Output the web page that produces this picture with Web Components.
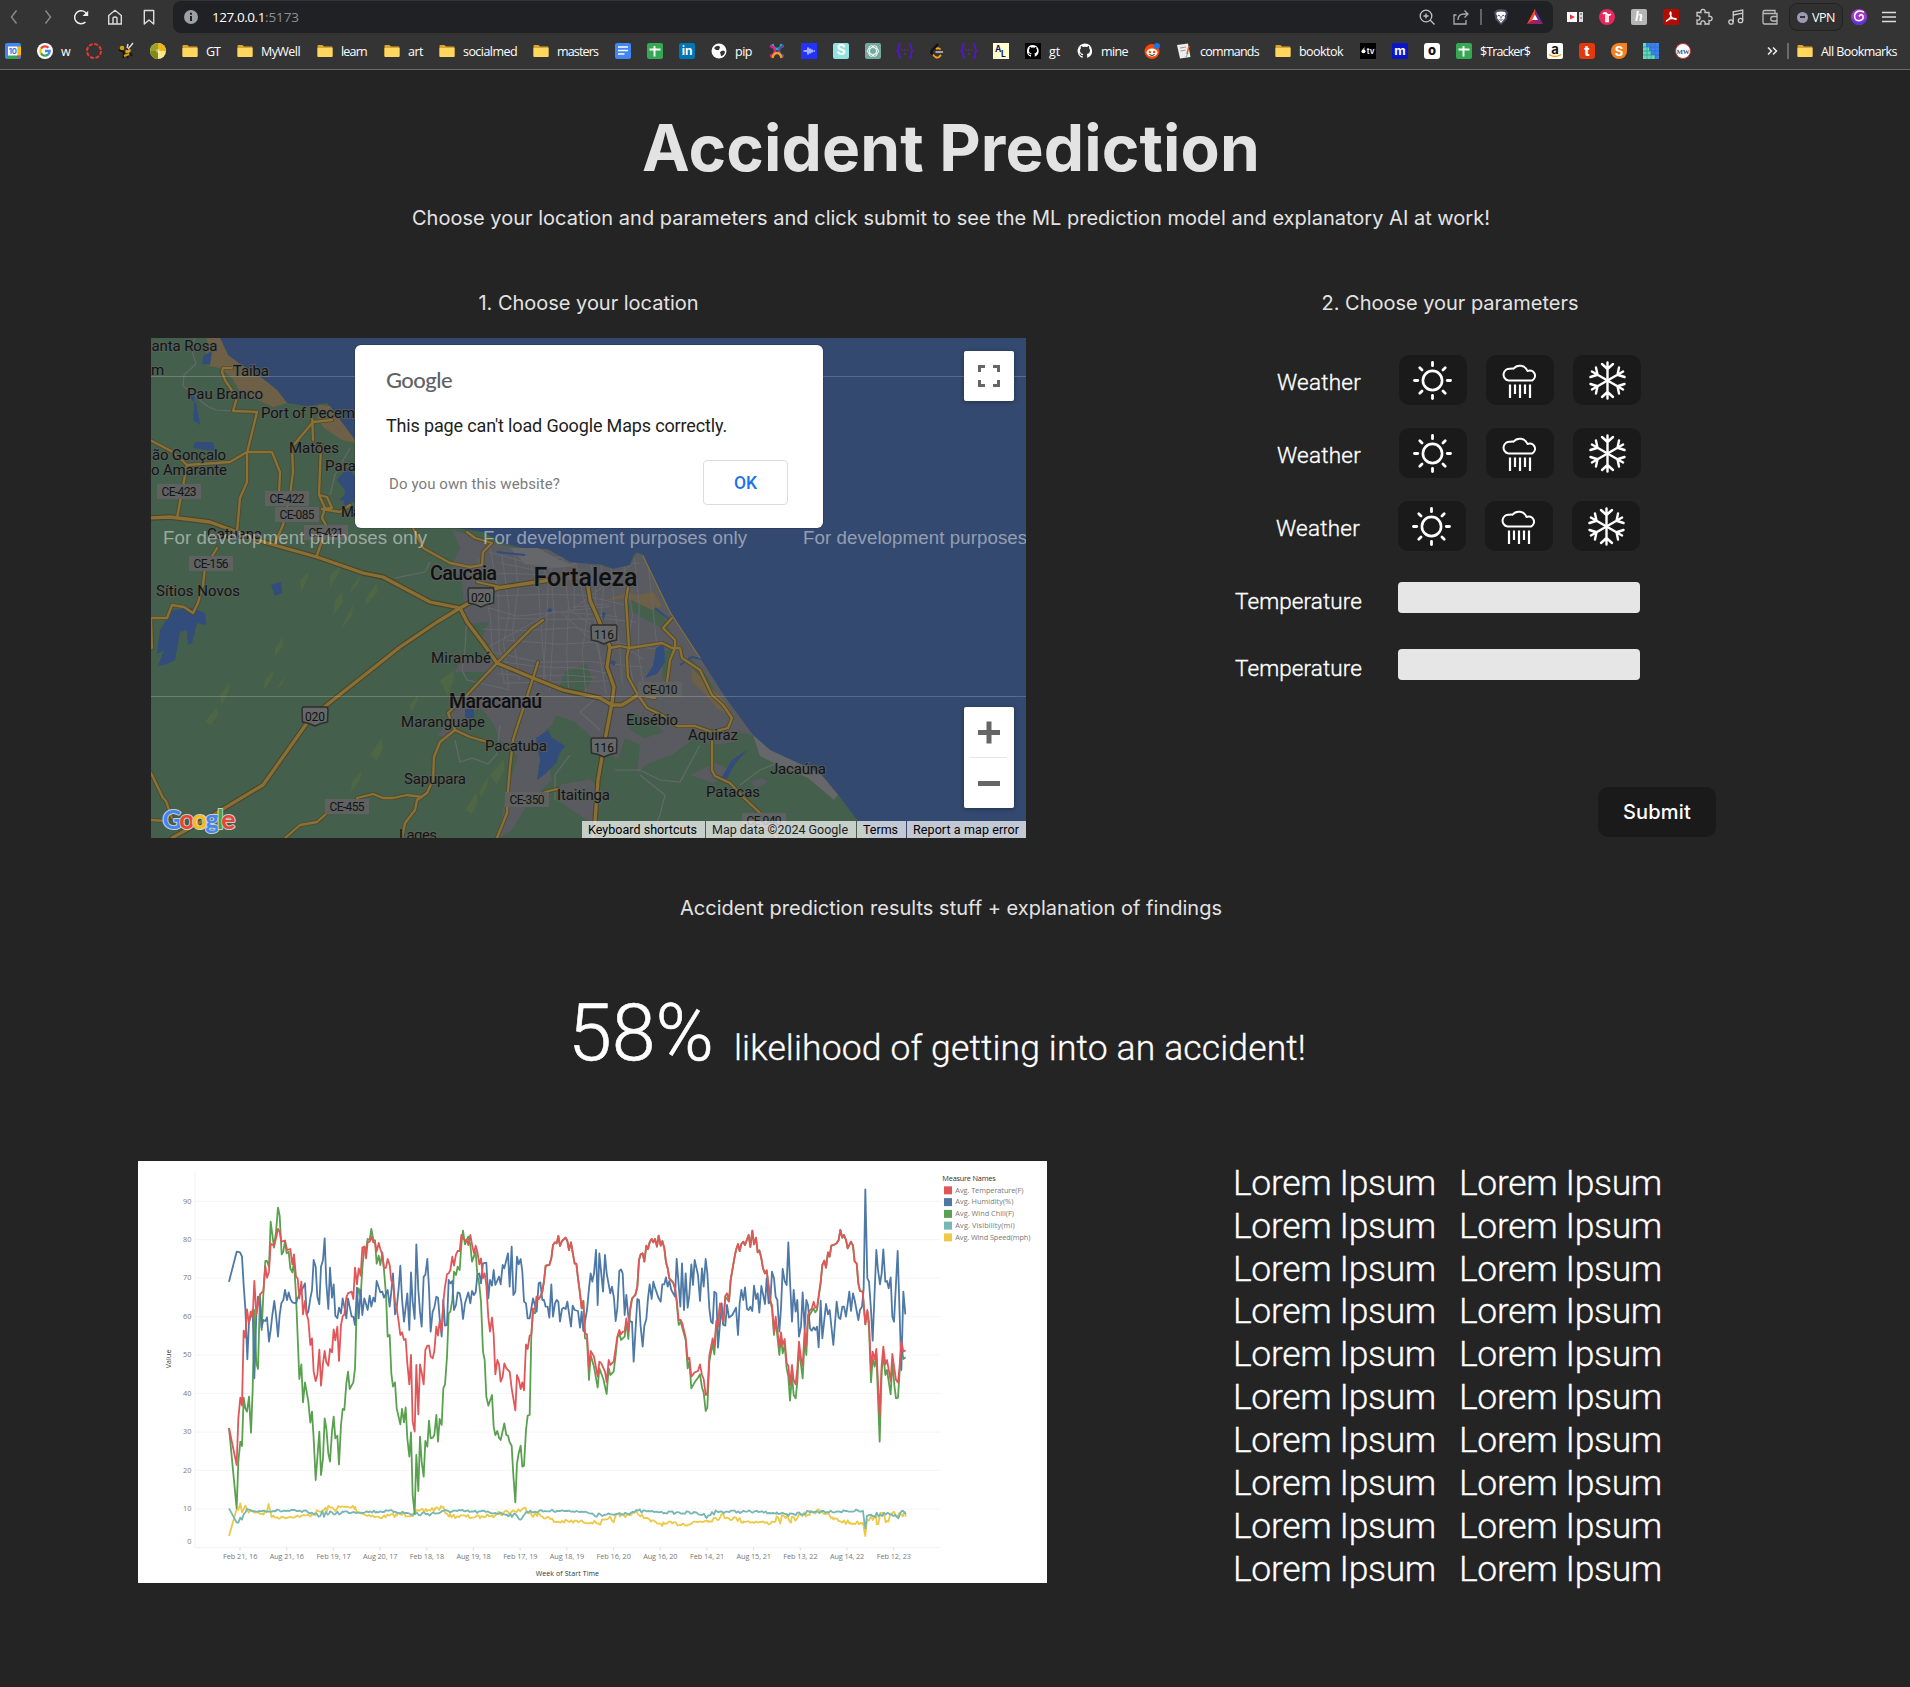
<!DOCTYPE html>
<html lang="en">
<head>
<meta charset="utf-8">
<title>Accident Prediction</title>
<style>
html,body{margin:0;background:#242424;color:#e3e3e3;font-family:Inter,"Liberation Sans",sans-serif}
body{width:1910px;height:1687px;overflow:hidden}
</style>
</head>
<body>
<accident-app></accident-app>
<script>
const define=(name,html,init)=>customElements.define(name,class extends HTMLElement{
  connectedCallback(){
    if(this.shadowRoot)return;
    const t=document.createElement('template');
    t.innerHTML=typeof html==='function'?html(this):html;
    this.attachShadow({mode:'open'}).append(t.content.cloneNode(true));
    if(init)init(this,this.shadowRoot);
  }
});

/* A single line of text, tracked so that it fills the width in its w attribute. */
define('fit-text','<style>:host{display:inline-block;white-space:pre}</style><span><slot></slot></span>',(el,root)=>{
  const w=+el.getAttribute('w'),s=root.querySelector('span');
  const n=s.getBoundingClientRect().width,c=el.textContent.length;
  if(w&&n){s.style.letterSpacing=((w-n)/c).toFixed(3)+'px';el.style.width=w+'px'}
});

const letter=(bg,t,fg,fs=12,extra='')=>`<rect width="16" height="16" rx="2" fill="${bg}"/><text x="8" y="12.3" text-anchor="middle" font-size="${fs}" font-weight="700" fill="${fg}" ${extra}>${t}</text>`;
const cat='<path d="M8 0.5a7.5 7.5 0 0 0-2.4 14.6v-2.3c-2 .4-2.5-.9-2.8-1.5-.3-.5-.8-.8-.2-.9.8-.1 1.200.6 1.500 1 .6.9 1.200.8 1.700.6.1-.5.3-.8.6-1-1.900-.3-3.400-1.200-3.400-3.600 0-.9.3-1.600.9-2.200-.1-.4-.3-1.200.1-2.100 0 0 .7-.1 2.100.9a7 7 0 0 1 3.800 0c1.400-1 2.100-.9 2.100-.9.4.9.2 1.700.1 2.100.6.600.9 1.300.9 2.200 0 2.400-1.500 3.300-3.400 3.600.4.300.6.8.6 1.600v2.400A7.500 7.500 0 0 0 8 .5z" fill="#fff"/>';
const ICONS={
back:'<path d="M10.500 1.500 5.500 8l5 6.500" fill="none" stroke="#8b8b8b" stroke-width="1.400"/>',
fwd:'<path d="m5.500 1.500 5 6.500-5 6.500" fill="none" stroke="#8b8b8b" stroke-width="1.400"/>',
reload:'<path d="M12.500 13A6.500 6.500 0 1 1 13.800 5" fill="none" stroke="#eee" stroke-width="1.500"/><path d="M9.500 7h5.700V1.800z" fill="#eee"/>',
home:'<path d="M1.700 6.500 8 1.300l6.300 5.200V15H1.700zM6 15V9.500q0-1.500 2-1.500t2 1.500V15" fill="none" stroke="#ddd" stroke-width="1.400"/>',
mark:'<path d="M3.300 1.500h9.400v13.500L8 11l-4.700 4z" fill="none" stroke="#ddd" stroke-width="1.400" stroke-linejoin="round"/>',
info:'<circle cx="8" cy="8" r="7" fill="#9aa0a6"/><path d="M7 7h2v5H7zM7 3.800h2v2H7z" fill="#202124"/>',
mag:'<g fill="none" stroke="#c3c3c3" stroke-width="1.300"><circle cx="7" cy="7" r="5.800"/><path d="m11.300 11.300 4.200 4.200M4.500 7h5M7 4.500v5"/></g>',
share:'<g fill="none" stroke="#aaa" stroke-width="1.300"><path d="M3.500 6H1v9h12v-4M5 11q0-6 6-6h4M11.500 1.500 15 5l-3.500 3.500"/></g>',
bar:'<path d="M8 0v16" stroke="#888" stroke-width="1.300"/>',
brave:'<path d="M8 0 3.500.8 1 3.500l1.500 7L8 16l5.500-5.500 1.500-7L12.500.8z" fill="#4a4f63"/><path d="M8 2.500 4 3l-1 2 1.500 2L4 9l4 5L12 9l-.5-2L13 5l-1-2z" fill="#fff"/><path d="M5 6.200 7 7M11 6.200 9 7M8 7v2.500M6.500 10.500 8 11.300l1.500-.8" stroke="#4a4f63" fill="none"/>',
bat:'<path d="M8 0 0 15h16z" fill="#662d91"/><path d="M8 0 0 15l8-4.800z" fill="#ff4724"/><path d="M0 15h16l-8-4.800z" fill="#9e1f63"/><path d="M8 5.500 5 11h6z" fill="#fff"/>',
cam:'<rect y="3" width="10" height="10" fill="#fff"/><path d="M3 5.500v5L8 8z" fill="#e33"/><path d="M12 3h4v10h-4z" fill="#ddd"/><path d="M14 4v8" stroke="#555" stroke-dasharray="2"/>',
pink:'<circle cx="8" cy="8" r="8" fill="#e5295c"/><path d="M4 5q2-2 4 0t4 0M9 5.500v7H7v-7" stroke="#fff" stroke-width="1.700" fill="none"/>',
h:letter('#b5b5b5','h','#fff',14,'font-style="italic" font-family="Liberation Serif"'),
pdf:'<rect width="16" height="16" rx="2" fill="#b30b00"/><path d="M3 12.500Q9 9 8 3.500 7 2 7 5q1.500 5 6 5.500 1-1.500-3-1.200Q5 9.700 3 12.500z" fill="none" stroke="#fff" stroke-width="1.200"/>',
puzzle:'<path d="M2 3.500h4a2.200 2.200 0 1 1 4 0h4v4a2.200 2.200 0 1 1 0 4V15h-4a2.200 2.200 0 1 0-4 0H2v-4a2.200 2.200 0 1 0 0-4z" fill="none" stroke="#ccc" stroke-width="1.300"/>',
music:'<g fill="none" stroke="#ccc" stroke-width="1.300"><circle cx="3" cy="13" r="2.200"/><circle cx="12.500" cy="11.500" r="2.200"/><path d="M5.200 13V2.800L14.700 1v10.500M5.200 6l9.500-1.800"/></g>',
wallet:'<g fill="none" stroke="#bbb" stroke-width="1.300"><path d="M13 4V1.500H2.500a1.500 1.500 0 0 0 0 3H15V15H2.500A1.500 1.500 0 0 1 1 13.500V3M15 7.500h-4a2 2 0 0 0 0 4.500h4"/></g>',
swirl:'<circle cx="8" cy="8" r="8" fill="#a136c8"/><path d="M0 8a8 8 0 0 0 16 0q-3 5-8 5T0 8" fill="#5b35d8"/><path d="M13 3Q5 0 3.500 6.500q0 6 5.500 5 4-1 3-4.500-2-3-4 .5" fill="none" stroke="#fff" stroke-width="1.600"/>',
menu:'<path d="M1 3.500h14M1 8h14M1 12.500h14" stroke="#ddd" stroke-width="1.400"/>',
cal:'<rect width="16" height="16" rx="2" fill="#4285f4"/><path d="M12.500 3.500H16v9h-3.500z" fill="#fbbc04"/><path d="M2 12.500h10.500V16H2z" fill="#34a853"/><path d="M12.500 12.500H16L12.500 16z" fill="#ea4335"/><rect x="3" y="3.500" width="9.500" height="9" fill="#fff"/><text x="7.800" y="10.700" text-anchor="middle" font-size="7.500" font-weight="700" fill="#1a73e8">10</text>',
g:'<circle cx="8" cy="8" r="8" fill="#fff"/><g fill="none" stroke-width="2.300"><path d="M11.500 4.800A4.700 4.700 0 0 0 4 5.600" stroke="#ea4335"/><path d="M4 5.600a4.700 4.700 0 0 0 0 4.800" stroke="#fbbc05"/><path d="M4 10.400a4.700 4.700 0 0 0 7.300 1" stroke="#34a853"/><path d="M11.300 11.400Q12.700 10 12.700 8H8" stroke="#4285f4"/></g>',
ring:'<circle cx="8" cy="8" r="7" fill="none" stroke="#e8392f" stroke-width="2" stroke-dasharray="4 1.500"/>',
wasp:'<ellipse cx="10" cy="8" rx="3" ry="2" fill="#e4a820" transform="rotate(-30 10 8)"/><circle cx="4" cy="5" r="2.300" fill="#d9a300"/><path d="m8 3 2 4M12 1l-1 5M1 7l5 2M6 9l-1 6M9 10l1 5M12 10l2 3" stroke="#111" stroke-width="1.500"/><path d="m10 6 5-6M9 5l1-4" stroke="#ddd" stroke-width="1.500"/><path d="m6 13 5-2" stroke="#d9a300" stroke-width="2"/>',
pie:'<circle cx="8" cy="8" r="8" fill="#ffe88a"/><path d="M8 8V0a8 8 0 0 0-8 8z" fill="#98a32a"/><path d="M8 8H0a8 8 0 0 0 8 8z" fill="#7c8a17"/><path d="M8 8V0a8 8 0 0 1 8 8z" fill="#efb71e"/><circle cx="8" cy="8" r="2" fill="#fff6"/>',
folder:'<path d="M.5 3q0-1 1-1h4l1.500 1.500h7.500q1 0 1 1V13q0 1-1 1h-13q-1 0-1-1z" fill="#d9a334"/><path d="M.5 5h15v8q0 1-1 1h-13q-1 0-1-1z" fill="#ffd75e"/>',
docs:'<rect width="16" height="16" rx="2" fill="#4285f4"/><path d="M3 4h10M3 7.500h10M3 11h6.500" stroke="#fff" stroke-width="1.700"/>',
sheets:'<rect width="16" height="16" rx="2" fill="#34a853"/><path d="M2.500 6.500h11M7.500 3v10.500" stroke="#fff" stroke-width="1.900"/>',
in:letter('#0077b5','in','#fff',12),
globe:'<circle cx="8" cy="8" r="7.500" fill="#fff"/><path d="M3 5q4-4 6-1L8 7H5zm6 4q4-3 5 0-1 4-4 4z" fill="#333"/>',
x:'<g fill="none" stroke-width="2.400"><path d="M3.500 1q1 5 4.500 5t4.500-5" stroke="#12b5c9"/><path d="M1 3q5 1 5 5t-5 5" stroke="#e0218a"/><path d="M15 3q-5 1-5 5t5 5" stroke="#5a50a8"/><path d="M3.500 15q1-5 4.500-5t4.500 5" stroke="#f59b1c"/></g>',
wave:'<rect width="16" height="16" fill="#2233ff"/><path d="M2.500 8h1.500M5 7v2M7 4.500v7M9 5.500v5M11 6.500v3M12.500 8h1.500" stroke="#fff" stroke-width="1.200"/>',
s:letter('#8fe3e0','S','#fff',14),
gpt:'<rect width="16" height="16" rx="2" fill="#74aa9c"/><g fill="none" stroke="#fff" stroke-width=".8"><ellipse cx="8" cy="8" rx="5.800" ry="3.400"/><ellipse cx="8" cy="8" rx="5.800" ry="3.400" transform="rotate(60 8 8)"/><ellipse cx="8" cy="8" rx="5.800" ry="3.400" transform="rotate(120 8 8)"/></g>',
br:'<g fill="none" stroke="#5a12e0" stroke-width="1.500"><path d="M4 1Q2 1 2 3.500T.500 8Q2 8.500 2 12t2 3M12 1q2 0 2 2.500T15.500 8Q14 8.500 14 12t-2 3"/></g><path d="M4.500 7h1M7 7h1M10 7h1M7 11h2" stroke="#8a1fd0" stroke-width="1.200"/>',
leet:'<path d="M9 1 3 7.500q-1.500 1.500 0 3L6.500 14" fill="none" stroke="#111" stroke-width="2.200"/><path d="M4 11.500q3 4.500 6 2.500l2-2M7 6q2.500-1.800 4.500.5" fill="none" stroke="#ffa116" stroke-width="1.800"/><path d="M6.500 9H14" stroke="#b3b3b3" stroke-width="1.800"/>',
al:'<rect width="16" height="16" fill="#ffffd0"/><text x="2" y="8.500" font-size="8.500" font-weight="700" fill="#111166">A</text><text x="8" y="14" font-size="8.500" font-weight="700" fill="#111166">L</text>',
ghs:'<rect width="16" height="16" fill="#000"/><g transform="translate(1.500 1.500) scale(.81)">'+cat+'</g>',
gh:cat,
reddit:'<circle cx="8" cy="8.500" r="7.500" fill="#ff4500"/><ellipse cx="8" cy="9.500" rx="5.500" ry="4" fill="#fff"/><circle cx="5.800" cy="9" r="1.200" fill="#ff4500"/><circle cx="10.200" cy="9" r="1.200" fill="#ff4500"/><path d="M5.500 11.500q2.500 2 5 0" stroke="#222" fill="none"/><circle cx="13" cy="3" r="3" fill="#1a73e8"/>',
note:'<path d="m1 2 11-1.500L14.500 14 4 15.500z" fill="#eee"/><path d="m4 5 6-1M4.500 8l5-.8" stroke="#999"/><path d="m13 3-2 8" stroke="#e06030" stroke-width="1.500"/><path d="m10 14 2-4" stroke="#3bb"/>',
tv:'<rect width="16" height="16" fill="#000"/><circle cx="3.500" cy="8.300" r="2" fill="#fff"/><path d="m3.500 6 1-1.300" stroke="#fff"/><text x="10.500" y="10.800" text-anchor="middle" font-size="8" font-weight="600" fill="#fff">tv</text>',
m:letter('#0a14c8','m','#fff',12.500),
o:'<rect width="16" height="16" rx="3" fill="#fff"/><text x="8" y="12.300" text-anchor="middle" font-size="13" font-weight="800" fill="#111">o</text>',
amz:'<rect width="16" height="16" rx="2" fill="#fff"/><text x="8" y="10.500" text-anchor="middle" font-size="13" font-weight="700" fill="#111">a</text><path d="M2 11.500q6 4 12 0" fill="none" stroke="#f90" stroke-width="1.500"/>',
t:'<rect width="16" height="16" rx="3" fill="#e23a0c"/><text x="8" y="12.800" text-anchor="middle" font-size="14" font-weight="800" fill="#fff">t</text>',
so:'<path d="M8 0h8v8a8 8 0 1 1-8-8z" fill="#f58220"/><text x="8" y="12.700" text-anchor="middle" font-size="13" font-weight="700" fill="#fff">S</text>',
map:'<rect width="16" height="16" fill="#3d82ea"/><path d="M0 0h3v4h3v4h2v4h4v4H0z" fill="#5fe0a8"/><path d="M0 4h16M0 8h16M0 12h16M4 0v16M8 0v16M12 0v16" stroke="#2b66c4" stroke-width=".5"/>',
mw:'<circle cx="8" cy="8" r="7.500" fill="#fff" stroke="#c33"/><text x="8" y="10.500" text-anchor="middle" font-size="6.800" font-weight="700" font-family="Liberation Serif" fill="#25609b">MW</text>',
more:'<path d="m3 4.500 3.500 3.500L3 11.500m5-7 3.500 3.500L8 11.500" fill="none" stroke="#eee" stroke-width="1.500"/>'
};
define('ui-icon',el=>`<style>:host{display:block;flex:none;width:16px;height:16px}svg{display:block;overflow:visible}</style><svg width="16" height="16" viewBox="0 0 16 16" font-family="Inter,sans-serif">${ICONS[el.getAttribute('name')]}</svg>`);

const slots=(items,end)=>items.map((it,i)=>{
  const [x,ic,txt,w]=it,nx=i+1<items.length?items[i+1][0]:end;
  return `<span class="slot" style="width:${nx-x}px"><ui-icon name="${ic}"></ui-icon>${txt?`<fit-text w="${w}">${txt}</fit-text>`:''}</span>`}).join('');

define('browser-bar',()=>`<style>
:host{display:block;height:70px;box-sizing:border-box;background:#343434;border-bottom:1px solid #6a6a6a;font:12.500px "Open Sans","Noto Sans",sans-serif;color:#fff;width:1910px}
.top{display:flex;height:34px;align-items:center}
.nav{display:flex;padding-left:6px;width:167px;gap:17.700px}
.addr{display:flex;align-items:center;box-sizing:border-box;width:1380px;height:32px;background:#202124;border-radius:8px;padding:0 0 0 10px;font-size:13.500px}
.addr .url{margin-left:13px;display:flex}.addr .port{color:#8d9094}
.addr .tail{display:flex;margin-left:auto;width:134px}
.slot{display:flex;align-items:center;gap:8px;flex:none}
.ext{display:flex;padding-left:14px;align-items:center}
.vpn{display:flex;align-items:center;gap:4px;width:54px;height:28px;box-sizing:border-box;border:1px solid #222;border-radius:8px;padding-left:7px;background:#303030}
.vpn i{width:11px;height:11px;border-radius:50%;background:#9a9ab0;display:flex;align-items:center;justify-content:center}.vpn i:after{content:"";width:5px;height:2px;background:#333}
.marks{display:flex;height:34px;align-items:center;padding-left:5px}
</style>
<div class="top"><div class="nav">${['back','fwd','reload','home','mark'].map(n=>`<ui-icon name="${n}"></ui-icon>`).join('')}</div>
<div class="addr"><ui-icon name="info"></ui-icon><span class="url"><fit-text w="53">127.0.0.1</fit-text><fit-text class="port" w="34">:5173</fit-text></span>
<span class="tail">${slots([[1419,'mag'],[1453,'share'],[1473,'bar'],[1493,'brave'],[1527,'bat']],1551)}</span></div>
<div class="ext">${slots([[1567,'cam'],[1599,'pink'],[1631,'h'],[1663,'pdf'],[1695,'puzzle'],[1728,'music'],[1762,'wallet']],1789)}<span class="vpn"><i></i><fit-text w="23">VPN</fit-text></span>
<span class="slot" style="width:8px"></span>${slots([[1851,'swirl'],[1881,'menu']],1900)}</div></div>
<div class="marks">${slots([[5,'cal'],[37,'g','w',9],[86,'ring'],[118,'wasp'],[150,'pie'],[182,'folder','GT',14],[237,'folder','MyWell',39],[317,'folder','learn',26],[384,'folder','art',15],[439,'folder','socialmed',54],[533,'folder','masters',41],[615,'docs'],[647,'sheets'],[679,'in'],[711,'globe','pip',17],[769,'x'],[801,'wave'],[833,'s'],[865,'gpt'],[897,'br'],[929,'leet'],[961,'br'],[993,'al'],[1025,'ghs','gt',11],[1077,'gh','mine',27],[1144,'reddit'],[1176,'note','commands',59],[1275,'folder','booktok',44],[1360,'tv'],[1392,'m'],[1424,'o'],[1456,'sheets','$Tracker$',50],[1547,'amz'],[1579,'t'],[1611,'so'],[1643,'map'],[1675,'mw'],[1765,'more'],[1780,'bar'],[1797,'folder','All Bookmarks',76]],1900)}</div>`);

/* ---- map ---- */
const ROADS=['232,368 223,368 222,372 225,380 237,398 233,411 257,412 247,453 247,482 240,498 237,532','332,420 313,422 292,447 293,472 290,495 283,525 275,543','312,412 313,440','321,445 319,495 325,508 322,518 327,527 317,555','319,495 327,497 332,508 322,509 340,512 350,505','150,440 173,452 187,465 230,462 247,452 272,452 280,472 279,495','187,465 180,502 177,518','217,548 205,568 203,585 198,603 193,613 184,607 172,605 167,618 151,618','151,618 152,648','413,528 423,548 450,563 470,567 482,565 483,552 492,543 475,538 467,532','477,582 500,587','543,620 532,628 497,663 465,697 448,713 455,730 440,742 434,757 433,780 427,793 417,800 415,810 405,823 402,838','455,730 470,737 487,742','538,662 533,678 513,740 510,767 508,790 507,813 497,838','422,797 407,795 393,798 383,798 373,794 357,798','327,813 317,822 300,825 285,838','151,773 163,798 166,801 172,818','151,820 165,821','628,588 626,600 629,647 627,657 628,677 638,695 647,708 662,715 677,726 695,726 712,732 712,770 715,776 730,783 743,797 760,813 777,838','610,648 620,646 629,648 662,643 672,648 680,648 682,658 700,670 712,695 723,705 732,718 728,728 712,732','672,618 663,628 675,640 675,648 670,660 667,682 655,698 638,695','545,792 557,789'];
const BIG=['150,518 170,517 210,522 267,543 317,557 363,573 383,577 430,602 460,608','550,580 530,583 497,588 460,608 437,622 400,647 323,708 307,723 263,785 213,815 172,838','460,608 467,622 483,643 497,663 533,678 563,690 600,698 612,705 622,705 638,695','588,587 590,600 600,623 610,647 607,667 614,687 612,703 605,740 598,780 595,822 593,838'];
const LABELS=[[151.500,351,66,'anta Rosa'],[151,375,9,'m'],[233,376,36,'Taiba'],[187,399,76,'Pau Branco'],[261,418,94,'Port of Pecem'],[289,453,50,'Matões'],[325,471,31,'Para'],[152,460,74,'ão Gonçalo'],[151,475,76,'o Amarante'],[341,517,20,'Ma'],[207,539,55,'Catuana'],[156,596,84,'Sítios Novos'],[431,663,60,'Mirambé'],[401,727,84,'Maranguape'],[485,751,62,'Pacatuba'],[404,784,62,'Sapupara'],[557,800,53,'Itaitinga'],[399,840,38,'Lages'],[626,725,52,'Eusébio'],[688,740,50,'Aquiraz'],[770,774,56,'Jacaúna'],[706,797,54,'Patacas']];
const CITY=[[430,579.500,67,'Caucaia',20],[533.500,586,104,'Fortaleza',25],[449,707.500,93,'Maracanaú',19.500]];
const PLATES=[[157,484,'CE-423'],[265,491,'CE-422'],[275,507,'CE-085'],[304,525,'CE-421'],[189,556,'CE-156'],[505,792,'CE-350'],[325,799,'CE-455'],[638,682,'CE-010'],[742,813,'CE-040']];
const SHIELDS=[[481,597,'020'],[315,716,'020'],[604,634,'116'],[604,747,'116']];
let seed=7;const rnd=()=>(seed=(seed*16807)%2147483647)/2147483647;
const streets=()=>{let d='';
  for(let i=0;i<17;i++){const x=478+i*12;d+=`M${x} ${540+rnd()*20}l${4+rnd()*10} ${40+rnd()*20}l${-6+rnd()*12} ${30+rnd()*30}l${rnd()*16-4} ${30+rnd()*30}`}
  for(let i=0;i<13;i++){const y=552+i*11;d+=`M${478+rnd()*30} ${y}l${30+rnd()*30} ${rnd()*16-4}l${30+rnd()*30} ${rnd()*10-8}l${30+rnd()*30} ${rnd()*14-4}`}
  for(let i=0;i<8;i++)d+=`M${555+rnd()*20} ${605+rnd()*12}l${rnd()*160-80} ${rnd()*110-60}`;
  return d};
const COAST='220,338 228,355 240,364 262,378 277,390 287,403 307,406 327,403 337,417 355,440 400,495 443,526 483,532 503,543 523,548 547,549 560,556 570,562 583,565 600,564 613,569 630,565 633,556 637,552 643,555 652,575 660,595 670,612 700,658 725,697 753,735 770,750 793,763 820,773 837,793 857,820 870,838';
const scraps=()=>{let d='';const c=[[350,590],[345,620],[275,650],[265,680],[282,685],[205,722],[410,705],[440,680],[370,755],[352,782],[465,810],[490,775],[480,790],[220,695],[335,600],[365,600],[300,580],[330,575]];
  for(const [x,y] of c)d+=`M${x} ${y}l${6+rnd()*8} ${-8-rnd()*12}l${-2+rnd()*4} ${7+rnd()*5}l${-6-rnd()*5} ${10+rnd()*6}z`;return d};
define('map-canvas',()=>`<style>:host,svg{display:block}text{font-family:Roboto,sans-serif}</style>
<svg width="875" height="500" viewBox="151 338 875 500">
<defs><clipPath id="u"><path d="M452 533 470 534 500 545 523 549 547 549 570 562 583 565 600 565 613 569 630 565 637 553 643 555 670 612 665 640 650 680 640 698 610 705 580 695 545 690 520 700 500 680 492 660 480 622 492 600 470 590 455 575z"/></clipPath></defs>
<rect x="151" y="338" width="875" height="500" fill="#34496f"/>
<polygon points="151,338 ${COAST} 151,838" fill="#445f4c"/>
<path d="${scraps()}" fill="#4f6645"/>
<path d="M207 338h13l8 17 12 9 22 14 15 12 10 13-14 4-33-15-8-14-12-10-15-3zM318 405l12 1 25 34v3l-13-3-18-12-6-8z" fill="#6e6047"/>
<path d="M452 530 470 535 500 545 523 549 547 549 570 562 600 565 613 569 630 565 637 553 643 555 670 612 700 658 725 697 753 735 735 732 735 742 712 745 695 738 672 755 645 765 637 775 640 745 625 738 618 760 600 745 575 722 556 715 545 745 552 780 530 800 512 830 498 838 507 790 518 756 498 738 494 725 480 707 462 722 448 740 438 735 462 698 485 672 455 672 462 655 480 662 490 645 465 622 462 580 452 565 460 548zM560 785l30-6 15 15-12 30-18-12-15-10zM690 775l25-12 18 8-20 12zM750 782l12-4 6 4-12 6z" fill="#5a5b60"/>
<path d="M463 625 489 622 482 637 488 655 478 640zM565 672l22-8 5 16-14 18-20-8zM632 597l30 15 8 20-24-12-20-12zM663 652l10-5-3 25-8 8zM688 655l18 20 15 25-12-6-16-25zM545 730l18-12 12 14-10 18 4 20-18 8zM628 712l20 6 16 14-20 6-14-8z" fill="#445f4c"/>
<path d="M606 600l22-8 8 3 18-3 8 14-10 4-24-12zM692 668l34 35 8 14-16-8-14-16-12-12z" fill="#6e6047"/>
<g clip-path="url(#u)"><path d="${streets()}" stroke="#65686e" stroke-width="1" fill="none"/></g>
<path d="M195 338 191 348 196 364 184 375 183 386 207 406 216 410 233 411M350 448 335 475 330 495M467 615 465 650 462 670 467 680 510 690M395 578 425 572 430 562M455 740 460 762 472 758 488 764 497 754 500 725M615 770 640 770 660 780 680 782 700 745M640 775 665 795 660 815 650 838M570 755 555 775 555 800M740 785 760 770 785 760M600 695 580 712 600 730" fill="none" stroke="#626a69" stroke-width="1.200"/>
<path d="M753 735 770 750 820 773 838 795 834 800 808 778 780 766 760 756zM510 548l28 0 22 12 15 6-20 2-30-4z" fill="#66676a"/>
<g fill="#324c7c"><path d="M173 610 192 608 205 613 206 625 197 623 192 643 188 645 187 630 180 632 175 660 167 664 158 666 164 650 157 654 160 630zM187 393 195 395 193 420 200 425 196 402 190 400zM195 442h18l2 9-22-3zM337 480l10-12 8 8v22l-12 14 2-22zM339 500l12-10 4 12zM271 585l10-3 1 11-7 3zM536 738l12-8 4 8 13 8-6 8-2 8-12 12-8 6 3-20zM465 709h9v9h-9zM656 648l8-4 1 18-8 12-12 4 8-12zM720 780l12-20 15-10-12 14-10 18zM549 608a3 3 0 0 1 3 3 3 3 0 0 1-5 0zM612 660l4 2-2 4-4-3zM602 612l4 1-3 8z"/><path d="M655 608l15 12M680 665l12-8 10 2M497 552l28 3" stroke="#324c7c" stroke-width="2" fill="none"/><path d="M204 355l8-4-2 14-8-1z"/></g>
<g fill="none" stroke-linejoin="round" stroke-linecap="round">
${ROADS.map(p=>`<polyline points="${p}" stroke="#4f4a2e" stroke-width="4.200"/>`).join('')}${BIG.map(p=>`<polyline points="${p}" stroke="#4a4429" stroke-width="5.400"/>`).join('')}
${ROADS.map(p=>`<polyline points="${p}" stroke="#8a7136" stroke-width="2.300"/>`).join('')}${BIG.map(p=>`<polyline points="${p}" stroke="#8a6f35" stroke-width="3.300"/>`).join('')}
<polyline points="643,556 670,612 700,658" stroke="#84703a" stroke-width="1.200"/></g>
${PLATES.map(([x,y,t])=>`<rect x="${x}" y="${y}" width="44" height="15" fill="#5f6261"/><text x="${x+4.500}" y="${y+12}" font-size="12" textLength="35" fill="#151515">${t}</text>`).join('')}
${SHIELDS.map(([x,y,t])=>`<path d="M${x-12} ${y-9}h24l1 2-.5 13q-7 1-12.500 4-5.500-3-12.500-4L${x-13} ${y-7}z" fill="#656768" stroke="#2d2e2e" stroke-width="1.500"/><text x="${x}" y="${y+4.500}" font-size="12" text-anchor="middle" fill="#111">${t}</text>`).join('')}
<g font-size="15" fill="#121413" stroke="#5a5f5c" stroke-opacity=".75" stroke-width="2" paint-order="stroke">${LABELS.map(([x,y,w,t])=>`<text x="${x}" y="${y}" textLength="${w}">${t}</text>`).join('')}</g>
<g font-weight="500" fill="#101010" stroke="#5f6164" stroke-opacity=".8" stroke-width="2.500" paint-order="stroke">${CITY.map(([x,y,w,t,s])=>`<text x="${x}" y="${y}" textLength="${w}" font-size="${s}">${t}</text>`).join('')}</g>
<path d="M151 376.500h875M151 696.500h875" stroke="#fff" stroke-opacity=".2"/>
<g fill="#fff" fill-opacity=".48" font-size="18.700">${[163,483,803].map(x=>`<text style="font-family:'Liberation Sans'" x="${x}" y="543.500" textLength="264">For development purposes only</text>`).join('')}</g>
<text x="162.500" y="829" font-size="26.500" style="font-family:Lato" font-weight="700" textLength="73" stroke="#c9cfca" stroke-width="2" paint-order="stroke" stroke-linejoin="round"><tspan fill="#4285f4">G</tspan><tspan fill="#ea4335">o</tspan><tspan fill="#fbbc05">o</tspan><tspan fill="#4285f4">g</tspan><tspan fill="#34a853">l</tspan><tspan fill="#ea4335">e</tspan></text>
</svg>`);

define('map-dialog',`<style>
:host{display:flex;flex-direction:column;box-sizing:border-box;width:468px;height:183px;background:#fff;border-radius:6px;padding:20px 35px 22px 31px;font-family:Roboto,sans-serif;box-shadow:0 0 0 1px #0002}
.logo{color:#5f6368;font:500 22px/30px Lato,sans-serif;height:30px}
.msg{font-size:18px;line-height:26px;color:#212121;margin-top:18px;margin-bottom:21px}
.foot{display:flex;justify-content:space-between;align-items:center;padding-left:3px}
.q{font-size:15px;color:#7c7c7c;padding-top:2px}
.ok{display:flex;align-items:center;justify-content:center;width:85px;height:45px;box-sizing:border-box;border:1px solid #dadce0;border-radius:4px;color:#1a73e8;font-weight:500;font-size:17.500px}
</style><div class="logo"><fit-text w="66">Google</fit-text></div><div class="msg"><fit-text w="341">This page can't load Google Maps correctly.</fit-text></div><div class="foot"><span class="q"><fit-text w="171">Do you own this website?</fit-text></span><span class="ok">OK</span></div>`);

define('location-map',`<style>
:host{display:block;position:relative;width:875px;height:500px;overflow:hidden;font-family:Roboto,sans-serif}
map-dialog{position:absolute;left:204px;top:7px}
.b{position:absolute;left:813px;background:#fff;border-radius:2px;box-shadow:0 1px 5px #0005;width:50px}
.fs{top:13px;height:50px}.zm{top:369px;height:101px}
.b svg{display:block}
.attr{position:absolute;right:0;bottom:0;display:flex;gap:1px;height:17px;font-size:12.500px;line-height:17px;color:#000}
.attr span{background:#ffffffb3;padding-left:6px;box-sizing:border-box}
</style><map-canvas></map-canvas><map-dialog></map-dialog>
<div class="b fs"><svg width="50" height="50" fill="none" stroke="#666" stroke-width="3"><path d="M15.500 21v-5.500H21M29 15.500h5.500V21M15.500 29v5.500H21M29 34.500h5.500V29"/></svg></div>
<div class="b zm"><svg width="50" height="101"><path d="M14 25.500h22M25 14.500v22M14 76.500h22" stroke="#666" stroke-width="5"/><path d="M6 50.500h37" stroke="#e6e6e6"/></svg></div>
<div class="attr"><span style="width:123px"><fit-text w="109">Keyboard shortcuts</fit-text></span><span style="width:150px;color:#222"><fit-text w="136">Map data ©2024 Google</fit-text></span><span style="width:49px"><fit-text w="35">Terms</fit-text></span><span style="width:119px"><fit-text w="106">Report a map error</fit-text></span></div>`);

/* ---- parameters ---- */
const arm='<path d="M0 0V-18M-5.500-16.500 0-11.500 5.500-16.500"/>';
const WX={
sun:'<circle r="9.600" stroke-width="2.600"/>'+[0,45,90,135,180,225,270,315].map(a=>`<path stroke-width="2.800" transform="rotate(${a})" d="M0-14.800V-18"/>`).join(''),
rain:'<path stroke-width="2" d="M-11.500 0A5.700 5.700 0 0 1-9.500-11.700Q-8-12.300-6.500-11.800A8.200 8.200 0 0 1 7.500-9.500 5 5 0 1 1 12 0z"/><path stroke-width="2.200" stroke-linecap="butt" d="M-10 4V17.500M-5 4V13.500M0 4V17.500M5 4V13.500M10 4V17.500"/>',
snow:'<g stroke-width="2.400">'+[0,60,120,180,240,300].map(a=>`<g transform="rotate(${a})">${arm}</g>`).join('')+'</g>'};
const NUDGE={sun:-.5,rain:0,snow:.5};
define('weather-button',el=>{const k=el.getAttribute('kind');return `<style>:host{display:block;width:68px;height:50px;background:#1a1a1a;border-radius:10px}svg{display:block}</style><svg width="68" height="50" viewBox="-34 -25 68 50"><g fill="none" stroke="#fff" stroke-linecap="round" stroke-linejoin="round" transform="translate(${NUDGE[k]} .500)">${WX[k]}</g></svg>`});
define('param-row',el=>`<style>:host{display:flex;align-items:center;font:300 22.500px/26px Roboto,sans-serif;-webkit-text-stroke:.35px #fff;color:#fff}.l{width:177px;flex:none;display:flex;justify-content:flex-end;margin-right:38px;padding-top:3px}.c{display:flex;gap:19px}:host([text]) .l{width:178px;margin-right:36px;padding-top:6px;height:26px}</style><div class="l"><fit-text w="${el.getAttribute('w')}">${el.getAttribute('label')}</fit-text></div><div class="c"><slot></slot></div>`);
define('temp-field','<style>:host{display:block;width:242px;height:31px;border-radius:4px;background:#e6e6e6}</style>');
define('param-form',()=>{const w='<weather-button kind="sun"></weather-button><weather-button kind="rain"></weather-button><weather-button kind="snow"></weather-button>';
return `<style>:host{display:flex;flex-direction:column;height:483px}param-row{margin-bottom:23px;height:50px}.third{margin-left:-1px;margin-bottom:31px}param-row[text]{height:31px;margin-bottom:36px}
.sub{margin-top:auto;align-self:flex-end;width:118px;height:50px;border-radius:10px;background:#1a1a1a;color:#fff;display:flex;align-items:center;justify-content:center;font:500 20px Inter,sans-serif}</style>
<param-row label="Weather" w="84">${w}</param-row><param-row label="Weather" w="84">${w}</param-row><param-row class="third" label="Weather" w="84">${w}</param-row>
<param-row text label="Temperature" w="127"><temp-field></temp-field></param-row><param-row text label="Temperature" w="127"><temp-field></temp-field></param-row>
<div class="sub"><fit-text w="68">Submit</fit-text></div>`});

/* ---- chart: coordinates are thirds of a pixel ---- */
const shift=s=>s.trim().split(/\s+/).map(p=>{const[a,b]=p.split(',');return (+a+1350)+','+b}).join(' ');
const redA='297,819 320,930 325,790 331,728 336,752 341,527 346,548 351,463 357,505 362,470 368,488 373,378 379,478 384,450 390,418 400,408 406,333 411,368 417,350 422,266 432,272 438,250 444,222 449,230 454,260 465,257 471,285 481,282 487,328 492,298 498,365 503,370 508,430 514,380 519,478 525,438 530,478 535,495 541,570 546,550 551,650 557,678 562,660 568,584 573,692 579,625 584,588 589,622 595,632 600,582 606,592 611,523 616,556 622,515 627,618 633,510 638,484 643,478 649,428 654,415 665,410 670,432 675,338 681,388 686,340 692,362 697,278 703,275 708,310 713,262 719,260 724,245 730,262 735,264 740,290 746,264 751,282 757,300 762,340 768,338 773,312 779,330 784,378 789,380 795,440 800,460 806,500 811,540 816,532 822,555 827,552 832,625 838,688 843,600 848,800 854,830 859,630 865,778 870,628 875,652 881,688 886,585 892,572 897,572 902,605 908,610 913,588 919,515 924,542 929,498 935,530 940,440 945,395 951,358 956,355 961,345 967,305 972,332 978,298 983,288 989,288 994,240 999,250 1005,256 1010,255 1015,270 1021,240 1026,268 1032,295 1037,272 1042,290 1048,328 1053,310 1059,370 1064,355 1069,390 1075,488 1080,530 1086,488 1091,540 1096,658 1102,615 1107,628 1112,680 1118,665 1123,625 1129,640 1139,650 1145,700 1156,766 1161,660 1166,672 1172,702 1177,682 1182,706 1188,568 1193,582 1199,542 1204,540 1209,460 1215,465';
const peak4='1220,425 1226,432 1231,425 1237,410 1242,378 1247,332 1258,330 1264,310 1269,270 1275,262 1280,265 1285,243 1290,273 1296,258 1307,248 1312,258 1317,285 1323,262 1328,292 1334,326 1339,326 1344,370 1350,415 1355,460 1360,438';
const peak5=shift('161,425 166,420 172,395 177,315 182,298 188,295 193,320 199,272 204,282 209,262 215,252 220,262 225,252 231,275 236,242 242,272 247,258 253,280 258,322 263,340 268,370 279,382 285,400');
const peak6=shift('452,375 463,310 468,285 474,267 479,288 484,267 490,260 495,270 506,240 511,276 517,227 522,268 528,248 533,292 538,286 544,310 549,340 555,355 560,346 566,395');
const peak7=shift('722,382 727,330 733,317 738,338 744,292 749,305 754,272 765,268 770,265 776,255 781,225 787,248 792,240 798,255 803,280 813,260 819,272 824,320 830,325 835,385 840,408 848,410');
const RED=[redA,peak4,shift('15,535 21,538 27,640 32,588 42,605 53,665 58,620 64,625 75,650 80,682 86,615 91,630 101,620 107,580 112,545 118,525 123,538 128,530 134,530 139,490 145,530 150,465 156,430'),peak5,shift('290,435 296,495 302,495 307,505 317,548 323,615 328,608 334,665 344,652 354,648 360,628 366,660 371,672 377,720 382,715 388,602 398,550 403,575 409,498 414,512 420,445 425,480 430,500 436,422 441,415 447,438'),peak6,shift('571,438 576,450 582,532 587,485 592,525 598,578 603,532 608,570 614,552 620,625 625,632 630,690 636,630 641,675 647,688 652,640 657,560 663,610 668,632 674,525 679,572 684,480 690,465 695,462 701,440 706,458 711,458 717,415'),peak7,shift('856,508 862,465 867,500 873,645 878,590 884,612 889,582 899,782 905,630 910,575 916,628 921,615 932,678 937,597 943,640 948,675 954,682 959,630 964,558 970,590 977,586')].join(' ');
const greenA='297,819 320,1060 325,920 331,860 336,873 341,728 346,760 351,770 357,725 363,833 368,705 373,465 379,625 384,642 390,418 395,525 400,420 406,318 411,318 417,335 422,200 432,278 438,230 444,158 449,182 455,298 460,290 465,257 470,295 476,290 481,340 487,352 492,320 498,420 503,545 508,672 514,628 519,742 525,682 535,740 541,803 546,770 551,850 557,975 568,830 573,960 579,910 584,790 589,820 595,895 600,920 606,830 611,785 616,850 622,842 627,928 633,810 638,762 643,765 649,685 654,650 659,702 670,682 675,640 681,430 686,400 692,425 697,340 703,275 708,285 713,252 719,255 724,222 730,255 735,256 740,326 746,302 751,330 757,292 762,345 768,420 773,545 779,540 784,655 789,695 795,682 800,760 811,808 816,762 822,802 827,757 832,850 838,905 843,832 848,1020 854,1075 859,900 865,1008 870,845 875,920 881,965 886,858 892,875 897,797 902,850 908,848 913,840 919,780 924,860 929,792 935,810 940,700 945,688 951,605 956,475 961,470 967,435 972,350 978,360 983,335 989,345 994,270 999,227 1005,268 1010,255 1015,245 1021,270 1026,320 1037,290 1042,360 1048,390 1053,440 1059,590 1064,615 1069,725 1075,752 1086,720 1091,815 1096,840 1102,828 1107,848 1112,855 1123,805 1129,840 1134,842 1139,862 1145,872 1150,960 1156,1042 1161,925 1166,895 1172,872 1177,935 1182,932 1188,825 1193,782 1199,780 1204,540 1209,470 1215,475';
const GREEN=[greenA,peak4,shift('15,550 21,552 27,675 32,600 42,635 53,698 58,640 70,672 80,717 86,640 91,660 101,650 107,600 112,548 118,535 123,555 134,545 139,500 145,552 150,470 156,432'),peak5,shift('290,440 296,510 302,500 317,555 323,640 328,620 334,700 344,682 354,668 360,658 366,698 371,712 377,768 382,758 388,620 398,565 403,598 409,510 414,515 420,450 430,508 436,425 447,440'),peak6,shift('571,440 576,460 582,540 587,495 598,600 603,545 608,595 614,570 620,640 625,665 630,737 636,660 641,720 647,730 652,680 657,580 663,630 668,670 674,550 679,600 684,490 690,478 701,460 706,472 711,465 717,420'),peak7,shift('856,508 862,470 867,520 873,682 878,610 884,635 889,595 899,860 905,650 910,595 916,660 921,645 932,718 937,620 943,690 948,730 954,728 964,570 970,612 977,607')].join(' ');
const BLUE='297,380 320,290 330,292 336,305 341,390 346,460 352,613 357,500 362,485 368,465 373,670 379,480 384,425 390,440 395,518 400,495 406,498 411,487 417,560 422,525 427,480 433,438 438,480 444,545 449,480 454,445 460,435 465,405 471,435 476,412 481,432 487,442 498,445 503,430 508,420 519,398 525,385 530,478 535,470 541,430 546,405 551,315 557,335 562,425 568,448 573,335 579,315 584,250 589,385 595,462 600,338 606,428 611,388 616,482 622,490 627,458 633,475 638,430 643,455 649,490 654,430 665,485 670,485 675,510 681,398 686,490 692,405 697,480 703,430 713,465 719,422 724,455 730,428 735,440 740,378 751,412 757,410 762,428 773,405 779,455 784,410 789,355 795,478 800,460 806,400 811,332 816,430 822,500 832,415 838,525 843,352 848,440 854,492 859,268 865,405 870,470 875,515 881,365 886,360 892,312 897,400 902,530 908,470 913,458 919,425 924,428 929,490 935,545 940,435 945,512 951,510 956,375 961,385 967,378 972,465 978,450 983,412 989,415 994,440 999,492 1005,445 1015,412 1021,445 1026,408 1032,420 1037,412 1042,360 1048,355 1053,385 1059,325 1069,323 1075,430 1080,375 1086,392 1091,345 1096,390 1107,365 1112,388 1118,330 1123,340 1134,295 1139,395 1145,275 1150,420 1156,410 1161,305 1166,328 1172,312 1177,350 1182,440 1188,445 1193,490 1199,490 1209,430 1220,470 1226,385 1231,382 1237,435 1242,435 1247,455 1253,455 1258,488 1264,388 1269,485 1275,445 1280,435 1285,440 1290,500 1296,462 1301,458 1307,462 1312,440 1323,515 1328,452 1334,465 1344,468 1350,518 1355,470 1360,528 1371,465 1377,400 '+shift('32,355 37,380 42,355 48,285 53,450 58,295 69,410 75,300 80,355 91,415 96,395 102,430 107,498 112,460 118,348 123,343 128,355 134,480 139,420 145,485 150,500 156,500 161,620 172,432 177,435 182,515 188,575 193,512 199,492 204,430 209,388 215,432 220,380 225,398 236,430 242,440 247,388 253,388 258,367 263,395 268,378 274,405 285,425 290,312 301,455 306,325 312,465 317,355 323,458 328,420 334,328 339,390 344,315 354,360 360,438 366,340 371,395 377,312 382,355 388,460 393,500 398,505 403,410 409,415 414,578 425,445 430,510 436,512 441,450 447,488 457,480 468,458 474,540 479,445 484,405 490,435 495,397 501,462 506,465 511,455 517,468 522,392 528,432 533,415 538,473 544,393 555,447 560,370 566,445 571,440 576,350 582,370 587,425 592,435 598,530 603,460 608,342 614,378 620,390 625,262 630,378 636,500 641,405 647,470 652,435 657,545 663,515 668,412 674,525 679,435 684,450 690,520 695,527 701,517 706,525 711,515 716,577 722,437 727,550 738,447 744,478 749,465 760,570 770,440 776,488 781,492 787,455 792,455 798,485 808,410 813,468 819,415 824,435 835,495 840,465 846,455 851,400 856,103 862,370 867,380 873,465 878,557 889,285 894,345 900,388 905,355 910,283 916,380 921,378 926,400 932,367 937,485 942,500 953,288 959,480 964,645 970,410 976,478');
/* Fill weekly points between keys [x, y, amplitude]. */
const weekly=(keys)=>{let o='';for(let i=0;i+1<keys.length;i++){const[x,y,a]=keys[i],[X,Y]=keys[i+1];for(let p=x;p<X;p+=5.400){const t=(p-x)/(X-x);o+=`${p.toFixed(0)},${(y+(Y-y)*t+(rnd()*2-1)*a).toFixed(0)} `}}const l=keys[keys.length-1];return o+l[0]+','+l[1]};
const YELLOW='297,1143 320,1062 325,1065 331,1045 336,1072 346,1052 '+weekly([[351,1068,5],[400,1075,12],[417,1052,0],[425,1085,4],[450,1088,4],[530,1082,7],[560,1074,9],[590,1062,11],[625,1058,7],[675,1056,10],[690,1074,4],[740,1087,5],[800,1080,9],[850,1076,8],[890,1066,7],[935,1058,8],[960,1082,6],[1050,1087,4],[1090,1078,10],[1160,1067,9],[1190,1062,9],[1210,1078,10],[1245,1085,7],[1275,1100,6],[1350,1100,5],[1400,1102,9],[1435,1100,12],[1470,1082,8],[1520,1073,5],[1565,1100,6],[1600,1108,7],[1680,1105,8],[1735,1094,9],[1780,1082,8],[1840,1098,5],[1920,1104,5],[1940,1095,14],[1985,1092,9],[2040,1075,10],[2065,1062,6],[2110,1092,7],[2160,1104,6],[2199,1103,0],[2206,1143,0],[2212,1088,10],[2240,1092,18],[2270,1085,16],[2320,1085,16],[2327,1085,0]]);
const TEAL='297,1060 320,1103 325,1103 331,1088 336,1094 341,1078 346,1072 351,1062 '+weekly([[356,1068,4],[440,1067,4],[530,1070,2],[555,1078,9],[600,1076,7],[640,1071,4],[740,1070,3],[790,1068,5],[850,1078,8],[920,1074,6],[960,1068,5],[1080,1072,4],[1130,1077,6],[1155,1082,7],[1175,1090,2],[1190,1070,4],[1280,1067,2],[1360,1070,3],[1395,1080,7],[1430,1082,7],[1470,1075,6],[1540,1068,2],[1600,1072,4],[1700,1074,5],[1730,1082,7],[1760,1070,4],[1880,1070,3],[1940,1074,5],[1975,1083,9],[2020,1074,7],[2070,1069,4],[2199,1068,0],[2206,1120,0],[2212,1078,5],[2235,1080,8],[2280,1080,8],[2305,1090,3],[2314,1066,5],[2327,1078,0]]);
define('weather-chart',()=>{
const ys=[[90,139],[80,254],[70,369],[60,485],[50,600],[40,715],[30,831],[20,946],[10,1062]];
const xs=['Feb 21, 16','Aug 21, 16','Feb 19, 17','Aug 20, 17','Feb 18, 18','Aug 19, 18','Feb 17, 19','Aug 18, 19','Feb 16, 20','Aug 16, 20','Feb 14, 21','Aug 15, 21','Feb 13, 22','Aug 14, 22','Feb 12, 23'];
const lg=[['#e15759','Avg. Temperature(F)',204],['#4e79a7','Avg. Humidity(%)',174],['#59a14f','Avg. Wind Chill(F)',176],['#76b7b2','Avg. Visibility(mi)',178],['#edc948','Avg. Wind Speed(mph)',225]];
return `<style>:host{display:block;width:909px;height:422px;background:#fff}svg{display:block}</style>
<svg width="909" height="422" viewBox="138 1161 909 422"><g transform="translate(130 1155) scale(.333333)" font-family="Open Sans,sans-serif" font-size="22" fill="#787878">
${ys.map(([v,y])=>`<path d="M195 ${y}H2430" stroke="#f4f4f4" stroke-width="3"/><text x="184" y="${y+7}" text-anchor="end">${v}</text>`).join('')}
<text x="184" y="1168" text-anchor="end">0</text><path d="M195 48V1178H2430" fill="none" stroke="#f2f2f2" stroke-width="3"/>
${xs.map((t,i)=>{const x=330+i*140.070;return `<path d="M${x} 1178v8" stroke="#ddd" stroke-width="3"/><text x="${x-51}" y="1213" textLength="103">${t}</text>`}).join('')}
<text x="1217" y="1262" textLength="190" fill="#333" font-size="21">Week of Start Time</text><text transform="translate(124 640) rotate(-90)" textLength="56" fill="#333" font-size="21">Value</text>
<g fill="none" stroke-width="5.400" stroke-linejoin="round"><polyline stroke="#edc948" points="${YELLOW}"/><polyline stroke="#76b7b2" points="${TEAL}"/><polyline stroke="#59a14f" points="${GREEN}"/><polyline stroke="#4e79a7" points="${BLUE}"/><polyline stroke="#e15759" points="${RED}"/></g>
<text x="2437" y="78" textLength="160" fill="#333">Measure Names</text>
${lg.map(([c,t,w],i)=>`<rect x="2442" y="${94+i*35.300}" width="24" height="24" fill="${c}"/><text x="2476" y="${113+i*35.300}" textLength="${w}">${t}</text>`).join('')}
</g></svg>`});

define('lorem-list',()=>{const c='<div>'+'<fit-text w="203">Lorem Ipsum</fit-text>'.repeat(10)+'</div>';
return `<style>:host{display:flex;gap:23px;padding-top:.8px;font:300 35.500px/42.900px Roboto,sans-serif;-webkit-text-stroke:.3px #fff;color:#fff}div{display:flex;flex-direction:column}fit-text{height:42.900px}</style>${c}${c}`});

define('accident-app',`<style>
:host{display:block;width:1910px;height:1687px}
main{width:1902px;display:flex;flex-direction:column;font-size:20px;line-height:30px}
h1{margin:43px 0 0;font-size:64px;line-height:70px;font-weight:700;display:flex;justify-content:center}
.c{display:flex;justify-content:center;height:30px}
.sub{margin-top:20px}
.cols{display:flex;margin-top:55px;padding-left:151px;gap:158px}
.left{width:875px;display:flex;flex-direction:column;gap:20px}
.right{width:532px;display:flex;flex-direction:column;gap:37px}
param-form{height:482px}
.res{margin-top:55px}
.stat{display:flex;align-items:baseline;margin-top:62px;padding-left:568px;gap:20px;height:96px;color:#fff;font:300 79px/96px Roboto,sans-serif;-webkit-text-stroke:.6px #fff}
.stat .s{font-size:35.500px;line-height:43px;-webkit-text-stroke:.3px #fff}
.bottom{display:flex;margin-top:80px;padding-left:138px;gap:186px}
</style><browser-bar></browser-bar><main>
<h1><fit-text w="618">Accident Prediction</fit-text></h1>
<div class="c sub"><fit-text w="1078">Choose your location and parameters and click submit to see the ML prediction model and explanatory AI at work!</fit-text></div>
<section class="cols"><div class="left"><div class="c"><fit-text w="220">1. Choose your location</fit-text></div><location-map></location-map></div>
<div class="right"><div class="c"><fit-text w="257">2. Choose your parameters</fit-text></div><param-form></param-form></div></section>
<div class="c res"><fit-text w="542">Accident prediction results stuff + explanation of findings</fit-text></div>
<div class="stat"><fit-text w="146">58%</fit-text><fit-text class="s" w="572">likelihood of getting into an accident!</fit-text></div>
<section class="bottom"><weather-chart></weather-chart><lorem-list></lorem-list></section>
</main>`);
</script>
</body>
</html>
